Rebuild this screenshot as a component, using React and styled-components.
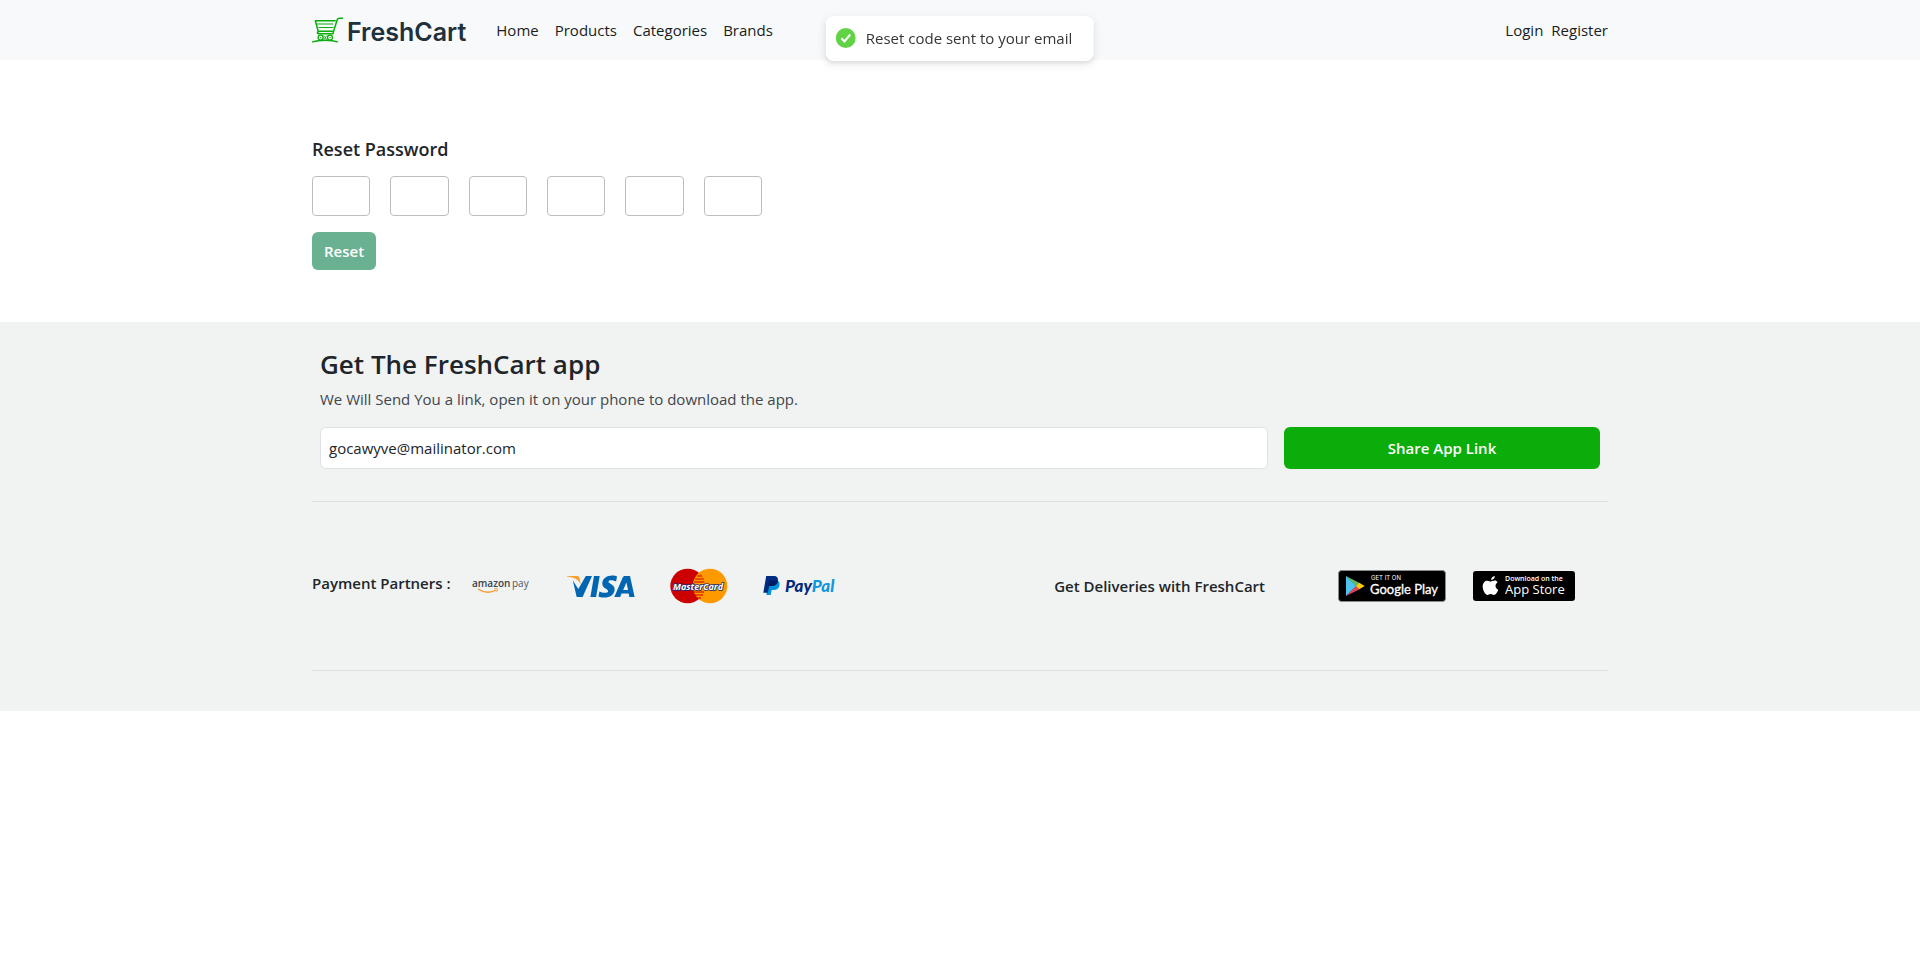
import React from "react";
import styled, { createGlobalStyle } from "styled-components";

const GlobalStyle = createGlobalStyle`
  *, *::before, *::after { box-sizing: border-box; }
  body {
    margin: 0;
    background: #fff;
    color: #212529;
    font-family: "Segoe UI", "Open Sans", "Noto Sans", sans-serif;
    font-size: 15px;
    line-height: 24px;
  }
  h1, h2, h3, p { margin: 0; }
  button, input { font: inherit; color: inherit; }
`;

const Container = styled.div`
  width: 100%;
  max-width: 1320px;
  margin: 0 auto;
  padding: 0 12px;
`;

const Header = styled.header`
  background: #f8f9fb;
`;

const NavBar = styled(Container)`
  display: flex;
  align-items: center;
  min-height: 60px;
`;

const Brand = styled.a`
  display: flex;
  align-items: center;
  gap: 3px;
  margin-right: 30px;
  color: #21313c;
  font-family: Inter, sans-serif;
  font-size: 25px;
  font-weight: 600;
  line-height: 32px;
  text-decoration: none;
`;

const BrandName = styled.span`
  padding-top: 4px;
`;

const NavLinks = styled.nav`
  display: flex;
  flex-wrap: wrap;
  gap: ${(p) => p.$gap}px;
  margin-left: ${(p) => (p.$end ? "auto" : 0)};
`;

const NavLink = styled.a`
  color: #1a1d20;
  text-decoration: none;
`;

const Toast = styled.div`
  position: fixed;
  top: 16px;
  left: 50%;
  transform: translateX(-50%);
  display: flex;
  align-items: center;
  gap: 10px;
  min-height: 45px;
  padding: 0 22px 1px 10px;
  border-radius: 8px;
  background: #fff;
  color: #363636;
  white-space: nowrap;
  box-shadow: 0 3px 10px rgba(0, 0, 0, 0.1), 0 3px 3px rgba(0, 0, 0, 0.05);
`;

const ResetSection = styled(Container).attrs({ as: "main" })`
  padding-top: 77px;
  padding-bottom: 52px;
`;

const ResetTitle = styled.h1`
  margin-bottom: 15px;
  font-size: 18px;
  font-weight: 600;
  line-height: 24px;
`;

const CodeRow = styled.div`
  display: grid;
  grid-template-columns: repeat(6, 1fr);
  gap: 20px;
  max-width: 450px;
  margin-bottom: 16px;
`;

const CodeInput = styled.input`
  width: 100%;
  height: 40px;
  padding: 0;
  border: 1px solid #bdbdbd;
  border-radius: 4px;
  background: #fff;
  text-align: center;
`;

const Button = styled.button`
  min-height: ${(p) => (p.$wide ? 42 : 38)}px;
  padding: 0 12px;
  border: 0;
  border-radius: 6px;
  background: ${(p) => (p.$wide ? "#0aad0a" : "#6ab192")};
  color: #fff;
  font-weight: 600;
`;

const Footer = styled.footer`
  background: #f0f3f2;
  padding: 24px 0 40px;
`;

const AppBlock = styled.div`
  padding: 0 8px 32px;
  border-bottom: 1px solid #dcdfe0;
`;

const AppTitle = styled.h2`
  margin-bottom: 5px;
  font-size: 26px;
  font-weight: 600;
  line-height: 36px;
`;

const AppText = styled.p`
  margin-bottom: 16px;
  color: #42464b;
`;

const ShareForm = styled.form`
  display: grid;
  grid-template-columns: 3fr 1fr;
  gap: 16px;
`;

const EmailInput = styled.input`
  min-width: 0;
  height: 42px;
  padding: 0 8px;
  border: 1px solid #dee2e6;
  border-radius: 6px;
  background: #fff;
`;

const PartnersRow = styled.div`
  display: flex;
  flex-wrap: wrap;
  align-items: center;
  justify-content: space-between;
  gap: 24px;
  min-height: 169px;
  padding-right: 33px;
  border-bottom: 1px solid #dcdfe0;
`;

const Group = styled.div`
  display: flex;
  flex-wrap: wrap;
  align-items: center;
`;

const GroupTitle = styled.h3`
  margin-right: ${(p) => p.$space}px;
  padding-bottom: ${(p) => (p.$raised ? 6 : 0)}px;
  font-size: 15px;
  font-weight: 600;
  line-height: 24px;
`;

const LogoList = styled.div`
  display: flex;
  align-items: center;
  gap: ${(p) => p.$gap}px;

  svg, a { display: block; }
`;

const CartIcon = () => (
  <svg width="32" height="26" viewBox="0 0 32 26" fill="none" stroke="#0aad0a" strokeLinecap="round" aria-hidden="true">
    <path d="M30.500 1.200h-3.300c-1.100 0-1.600.4-2 1.500L20.800 16.800H6.500c-1.400 0-1.500-1.500-.3-2" strokeWidth="1.500" />
    <path d="M3.400 3.800h19.800M3.400 3.800l2.900 11M6.300 14.300h14.400" strokeWidth="1.500" />
    <path d="M5.500 7h15.500M7 10.500h14" strokeWidth="1" />
    <circle cx="8.600" cy="20.600" r="2.500" strokeWidth="1.300" />
    <circle cx="18" cy="20.600" r="2.500" strokeWidth="1.300" />
    <path d="M8.600 20.600h.1M18 20.600h.1" strokeWidth="1.400" />
    <path d="M12 19l2.600 3.500M14.600 19l-2.600 3.500" strokeWidth=".8" />
    <path d="M.6 24.800c3-1 8-1.600 13-1.600s9 .6 11.800 1.600" strokeWidth="1.400" />
  </svg>
);

const CheckIcon = () => (
  <svg width="20" height="20" viewBox="0 0 20 20" aria-hidden="true">
    <circle cx="10" cy="10" r="10" fill="#61d345" />
    <path d="M5.700 10.300l3 3.200 5.800-7" fill="none" stroke="#fff" strokeWidth="2" />
  </svg>
);

const AmazonPay = () => (
  <svg width="60" height="18" viewBox="0 0 60 18" role="img" aria-label="Amazon Pay">
    <text x="0" y="10" fontFamily="Open Sans, sans-serif" fontSize="10" fontWeight="600" fill="#36424d">amazon</text>
    <text x="40" y="10" fontFamily="Open Sans, sans-serif" fontSize="10" fill="#4c5761">pay</text>
    <path d="M6 12c6 4 13 3.800 18.500 1" fill="none" stroke="#f79b34" strokeWidth="1.400" />
    <path d="M22.200 11.900c1.500-.5 3.300-.5 3.500 0s-.4 2-1.200 2.800" fill="none" stroke="#f79b34" strokeWidth="1" />
  </svg>
);

const Visa = () => (
  <svg width="68" height="23" viewBox="0 0 68 23" role="img" aria-label="Visa">
    <g fill="#0066b2">
      <path d="M18.800 1h6.200L15.600 22H9.700L5.800 5.500 11.300 14z" />
      <path d="M27 1h5.700l-3.600 21h-5.700z" />
      <path d="M50 1.400l-.9 5c-3.600-1.500-7.400-1.600-7.600.4-.2 2.100 6.700 2.500 6.100 8.200-.5 5.300-5.300 7.700-10.600 7.500-2.400-.1-4.300-.5-5.500-1.100l.9-5c3 1.600 8.300 2.200 8.700-.2.400-2.300-6.300-2.600-5.800-8.200.4-4.900 5.200-7.600 10-7.500 2 0 3.600.4 4.700.9z" />
      <path fillRule="evenodd" d="M58 1h5l4.600 21h-5.200l-.7-3.500h-7.200L53.200 22h-5.900l8.300-19.300C56.100 1.500 56.800 1 58 1zm1.400 6.600L56.200 15h4.900z" />
    </g>
    <path d="M0 1h9.600c1.500 0 2.500.6 2.900 2l1.200 6.200C11.700 5 8 2.400 0 1.500z" fill="#f7a02b" />
  </svg>
);

const MasterCard = () => (
  <svg width="58" height="36" viewBox="0 0 58 36" role="img" aria-label="MasterCard">
    <circle cx="40" cy="18" r="17.300" fill="#f90" />
    <circle cx="17.600" cy="18" r="17.300" fill="#c00" />
    <path d="M28.800 4.800a17.300 17.300 0 0 1 0 26.400 17.300 17.300 0 0 1 0-26.400z" fill="#f90" />
    <path d="M27 8h5M25 11h8.500M24 14h10M23 24h11M24 27h9M26 30h5" stroke="#c00" strokeWidth="1.200" />
    <g fontFamily="Open Sans, sans-serif" fontSize="9" fontStyle="italic" fontWeight="700">
      <text x="3" y="22" fill="#fff" stroke="#1b2a70" strokeWidth="1.500" paintOrder="stroke">MasterCard</text>
    </g>
  </svg>
);

const PayPal = () => (
  <svg width="78" height="22" viewBox="0 0 78 22" role="img" aria-label="PayPal">
    <path d="M5.500 5.500h7.200c3.200 0 4.500 2 3.700 5-.8 3.400-3 4.500-6.200 4.500H8.700l-1 5H3.400z" fill="#0093d6" />
    <path d="M3.200 1h7.300c3.400 0 5 1.900 4.300 5.200-.8 3.400-3.300 4.900-6.800 4.900H6l-1.200 6.600H.3z" fill="#002b80" />
    <path d="M6.200 5.500h8.700c-.5 4-3 5.600-6.900 5.600H6l-1 5.400z" fill="#001a64" />
    <text x="22" y="17" fontFamily="Lato, sans-serif" fontSize="17" fontStyle="italic" fontWeight="900" fill="#002b80">Pay<tspan fill="#1296dc">Pal</tspan></text>
  </svg>
);

const GooglePlay = () => (
  <svg width="108" height="32" viewBox="0 0 108 32" role="img" aria-label="Get it on Google Play">
    <rect x=".5" y=".5" width="107" height="31" rx="3" fill="#000" stroke="#8b8b8b" />
    <path d="M8 6l10.500 10L8 26z" fill="#4ec3f0" />
    <path d="M8 6l13.500 7-3.300 3.200z" fill="#62bb62" />
    <path d="M8 26l10.300-10 3.200 3.200z" fill="#e84355" />
    <path d="M21.300 12.800l5.400 3.200-5.400 3.300-3.300-3.300z" fill="#fdcc0d" />
    <text x="33" y="10" fontFamily="Inter, sans-serif" fontSize="6" fill="#fff">GET IT ON</text>
    <text x="32" y="24" fontFamily="Lato, sans-serif" fontSize="13" fill="#fff" stroke="#fff" strokeWidth=".3">Google Play</text>
  </svg>
);

const AppStore = () => (
  <svg width="102" height="30" viewBox="0 0 102 30" role="img" aria-label="Download on the App Store">
    <rect width="102" height="30" rx="3" fill="#000" />
    <path d="M21.800 5c.1 2-1.500 3.900-3.600 3.900C18 7 19.800 5.100 21.800 5zM24.500 11.500c-3 1.900-2.400 5.900.7 7.200-.8 2.600-2.500 5.200-4.200 5.200-1.300 0-1.700-.8-3.300-.8s-2 .8-3.300.8c-2.100 0-4.800-4.500-4.700-8.600.1-3.600 2.300-5.600 4.600-5.600 1.500 0 2.500.9 3.600.9s2.200-1 3.900-1c1.100 0 2.100.6 2.700 1.900z" fill="#fff" />
    <text x="32" y="10" fontFamily="Open Sans, sans-serif" fontSize="7" fontWeight="600" fill="#fff">Download on the</text>
    <text x="32" y="23" fontFamily="Open Sans, sans-serif" fontSize="13" fill="#fff">App Store</text>
  </svg>
);

const codeDigits = [1, 2, 3, 4, 5, 6];
const pages = ["Home", "Products", "Categories", "Brands"];
const accountPages = ["Login", "Register"];

export default function App() {
  return (
    <>
      <GlobalStyle />
      <Header>
        <NavBar>
          <Brand href="#">
            <CartIcon />
            <BrandName>FreshCart</BrandName>
          </Brand>
          <NavLinks $gap={16} aria-label="Main">
            {pages.map((page) => (
              <NavLink key={page} href="#">{page}</NavLink>
            ))}
          </NavLinks>
          <NavLinks $gap={8} $end aria-label="Account">
            {accountPages.map((page) => (
              <NavLink key={page} href="#">{page}</NavLink>
            ))}
          </NavLinks>
        </NavBar>
      </Header>

      <ResetSection>
        <ResetTitle>Reset Password</ResetTitle>
        <form onSubmit={(e) => e.preventDefault()}>
          <CodeRow>
            {codeDigits.map((n) => (
              <CodeInput key={n} maxLength={1} inputMode="numeric" aria-label={`Code digit ${n}`} />
            ))}
          </CodeRow>
          <Button type="submit" disabled>Reset</Button>
        </form>
      </ResetSection>

      <Footer>
        <Container>
          <AppBlock>
            <AppTitle>Get The FreshCart app</AppTitle>
            <AppText>We Will Send You a link, open it on your phone to download the app.</AppText>
            <ShareForm onSubmit={(e) => e.preventDefault()}>
              <EmailInput type="email" aria-label="Email" defaultValue="gocawyve@mailinator.com" />
              <Button $wide type="submit">Share App Link</Button>
            </ShareForm>
          </AppBlock>
          <PartnersRow>
            <Group>
              <GroupTitle $space={21} $raised>Payment Partners :</GroupTitle>
              <LogoList $gap={35}>
                <AmazonPay />
                <Visa />
                <MasterCard />
                <PayPal />
              </LogoList>
            </Group>
            <Group>
              <GroupTitle $space={73}>Get Deliveries with FreshCart</GroupTitle>
              <LogoList $gap={27}>
                <a href="#"><GooglePlay /></a>
                <a href="#"><AppStore /></a>
              </LogoList>
            </Group>
          </PartnersRow>
        </Container>
      </Footer>

      <Toast role="status">
        <CheckIcon />
        Reset code sent to your email
      </Toast>
    </>
  );
}
